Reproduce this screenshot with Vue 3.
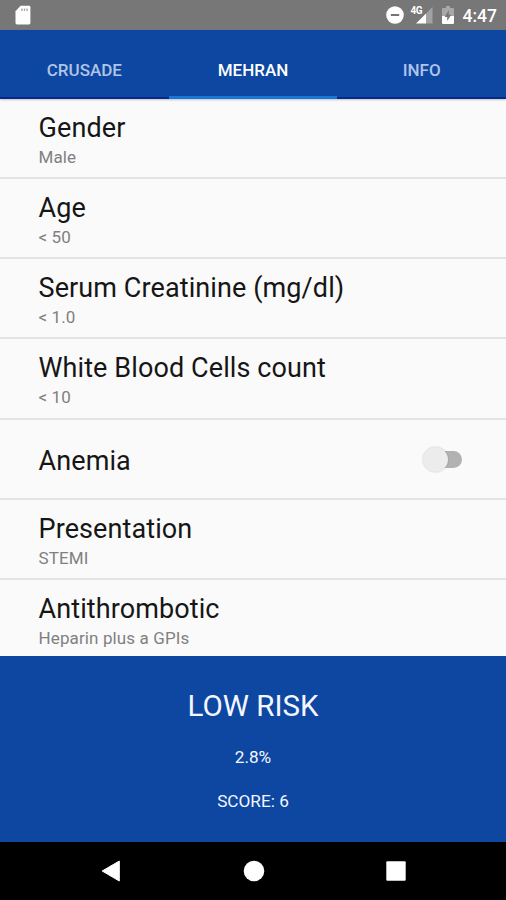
<script setup>
const tabs = [
  { label: 'CRUSADE', active: false },
  { label: 'MEHRAN', active: true },
  { label: 'INFO', active: false },
]
const rows = [
  { title: 'Gender', value: 'Male' },
  { title: 'Age', value: '< 50' },
  { title: 'Serum Creatinine (mg/dl)', value: '< 1.0' },
  { title: 'White Blood Cells count', value: '< 10' },
  { title: 'Anemia', toggle: true },
  { title: 'Presentation', value: 'STEMI' },
  { title: 'Antithrombotic', value: 'Heparin plus a GPIs' },
]
</script>

<template>
  <div class="screen">
    <header class="status">
      <svg class="sd" width="16" height="20" viewBox="0 0 16 20">
        <path d="M5.6 .8H14Q15.4 .8 15.4 2.2V18Q15.4 19.4 14 19.4H2Q.5 19.4 .5 18V6.3Z" fill="#fff" />
        <path d="M6.9 3.6V5.9M9.5 3.6V5.9M12.1 3.6V5.9" stroke="#aaa" stroke-width="1.4" />
      </svg>
      <div class="indicators">
        <svg class="dnd" width="18" height="18" viewBox="0 0 18 18">
          <circle cx="9" cy="9" r="8.8" fill="#fff" />
          <path d="M4.8 9H13.2" stroke="#666" stroke-width="1.8" />
        </svg>
        <div class="signal">
          <span class="network">4G</span>
          <svg width="18" height="17" viewBox="0 0 18 17">
            <path d="M17.5 0V16.5H11V6.5Z" fill="#a2a2a2" />
            <path d="M1 16.5L11 6.5V16.5Z" fill="#fff" />
          </svg>
        </div>
        <svg class="battery" width="12" height="18" viewBox="0 0 12 18">
          <path d="M4 0H8V2H11Q12 2 12 3V10H0V3Q0 2 1 2H4Z" fill="#a8a8a8" />
          <path d="M0 10H12V17Q12 18 11 18H1Q0 18 0 17Z" fill="#fff" />
          <path d="M6.8 4V8.7H9.3L5.2 15V11H2.7Z" fill="#777" />
        </svg>
        <span class="clock">4:47</span>
      </div>
    </header>

    <nav class="tabs">
      <button v-for="tab in tabs" :key="tab.label" class="tab" :class="{ active: tab.active }">{{ tab.label }}</button>
    </nav>

    <main class="list">
      <section v-for="row in rows" :key="row.title" class="row" :class="{ switchable: row.toggle }">
        <div class="title">{{ row.title }}</div>
        <div v-if="row.value" class="value">{{ row.value }}</div>
        <div v-if="row.toggle" class="switch"><span class="thumb"></span></div>
      </section>
    </main>

    <section class="result">
      <div class="risk">LOW RISK</div>
      <div class="percent">2.8%</div>
      <div class="score">SCORE: 6</div>
    </section>

    <footer class="navbar">
      <svg width="20" height="22" viewBox="0 0 20 22"><path d="M1.2 11L18.3 1V21Z" fill="#fff" stroke="#fff" stroke-linejoin="round" /></svg>
      <svg width="22" height="22" viewBox="0 0 22 22"><circle cx="11" cy="11" r="10.3" fill="#fff" /></svg>
      <svg width="20" height="20" viewBox="0 0 20 20"><rect x=".3" y=".3" width="19.4" height="19.4" rx="1" fill="#fff" /></svg>
    </footer>
  </div>
</template>

<style>
body {
  margin: 0;
  overflow: hidden;
}
</style>

<style scoped>
.screen {
  width: 506px;
  height: 900px;
  display: flex;
  flex-direction: column;
  overflow: hidden;
  background: #fafafa;
  font-family: Roboto, "Liberation Sans", sans-serif;
}
.status {
  box-sizing: border-box;
  height: 30px;
  flex: none;
  display: flex;
  justify-content: space-between;
  align-items: flex-start;
  padding: 5px 9px 0 15px;
  background: #777;
  color: #fff;
}
.indicators {
  display: flex;
  align-items: flex-start;
}
.dnd {
  margin-top: 1px;
}
.signal {
  display: flex;
  align-items: flex-start;
  margin-left: 7px;
}
.signal svg {
  margin: 2px 0 0 -9px;
}
.network {
  width: 13px;
  font-size: 10px;
  line-height: 11px;
  font-weight: 700;
  letter-spacing: -0.5px;
}
.battery {
  margin: 1px 0 0 9px;
}
.clock {
  margin: 1px 0 0 9px;
  font-size: 17.5px;
  line-height: 21px;
  font-weight: 500;
}
.tabs {
  height: 69px;
  flex: none;
  display: flex;
  background: #0d47a1;
  box-shadow: 0 1px 2px rgba(0, 0, 0, 0.22);
  z-index: 1;
}
.tab {
  flex: 1;
  padding: 13px 0 0;
  border: 0;
  border-bottom: 2px solid #062a8b;
  background: none;
  color: #b0c4e8;
  font: 500 17px/20px Roboto, "Liberation Sans", sans-serif;
}
.tab.active {
  color: #fff;
  border-bottom: 3px solid #1976d9;
  padding-top: 14px;
}
.list {
  height: 557px;
  flex: none;
  overflow: hidden;
}
.row {
  box-sizing: border-box;
  height: 80.15px;
  padding: 12px 44.5px 0 38.5px;
  border-bottom: 2px solid #e4e4e4;
}
.title {
  font-size: 27px;
  line-height: 34px;
  letter-spacing: 0.1px;
  color: #161616;
}
.value {
  font-size: 17px;
  line-height: 20px;
  margin-top: 2px;
  letter-spacing: 0.12px;
  color: #808080;
}
.switchable {
  display: flex;
  align-items: center;
  justify-content: space-between;
  padding-top: 4px;
}
.switch {
  box-sizing: border-box;
  width: 33px;
  height: 17px;
  margin-bottom: 2px;
  display: flex;
  align-items: center;
  border-radius: 9px;
  background: #b2b2b2;
}
.thumb {
  flex: none;
  width: 25px;
  height: 25px;
  margin-left: -6px;
  border-radius: 50%;
  background: #ececec;
  box-shadow: 0 0 2px rgba(0, 0, 0, 0.22);
}
.result {
  box-sizing: border-box;
  height: 186px;
  flex: none;
  padding-top: 32px;
  background: #0d47a1;
  color: #f4f7ff;
  text-align: center;
}
.risk {
  font-size: 29.5px;
  line-height: 36px;
}
.percent,
.score {
  font-size: 17.2px;
  line-height: 20px;
}
.percent {
  margin-top: 23px;
}
.score {
  margin-top: 24px;
}
.navbar {
  flex: 1;
  display: flex;
  align-items: center;
  justify-content: space-between;
  padding: 0 100px 0 101px;
  background: #000;
}
</style>
